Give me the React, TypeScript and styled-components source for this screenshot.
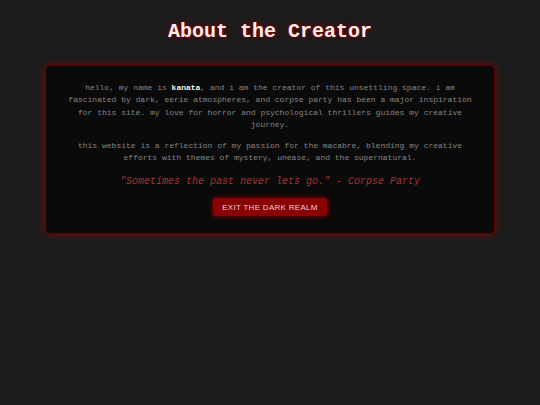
import React from 'react'
import styled, { createGlobalStyle } from 'styled-components'

const mono = `'Courier New', 'Nimbus Mono PS', 'FreeMono', Courier, 'Liberation Mono', monospace`

const GlobalStyle = createGlobalStyle`
  html, body {
    margin: 0;
    background: #1c1c1c;
  }
  body {
    font-family: ${mono};
  }
`

const App: React.FC = () => {
  return (
    <>
      <GlobalStyle />
      <Page>
        <Title>About the Creator</Title>
        <Card>
          <Paragraph>
            hello, my name is <Name>kanata</Name>, and i am the creator of this unsettling space. i am
            fascinated by dark, eerie atmospheres, and corpse party has been a major inspiration for
            this site. my love for horror and psychological thrillers guides my creative journey.
          </Paragraph>
          <Paragraph>
            this website is a reflection of my passion for the macabre, blending my creative efforts
            with themes of mystery, unease, and the supernatural.
          </Paragraph>
          <Quote>"Sometimes the past never lets go." - Corpse Party</Quote>
          <ExitButton>EXIT THE DARK REALM</ExitButton>
        </Card>
      </Page>
    </>
  )
}

export default App

const Page = styled.main`
  min-height: 405px;
  box-sizing: border-box;
  padding-top: 20px;
  display: flex;
  flex-direction: column;
  align-items: center;
`

const Title = styled.h1`
  margin: 0 0 21px;
  font-family: ${mono};
  font-size: 20px;
  line-height: 24px;
  font-weight: 700;
  color: #fbeeee;
  text-shadow: 0 0 3px #8b0000, 0 0 6px #6a0000;
`

const Card = styled.section`
  width: 450px;
  box-sizing: border-box;
  padding: 16px 20px 17px;
  background: #0a0a0a;
  border: 1px solid #5a0505;
  border-radius: 5px;
  box-shadow: 0 0 8px rgba(139, 0, 0, 0.85);
  display: flex;
  flex-direction: column;
  align-items: center;
  text-align: center;
`

const Paragraph = styled.p`
  margin: 0 0 8px;
  font-size: 8px;
  line-height: 12.4px;
  color: #858585;
`

const Name = styled.strong`
  color: #f2f2f2;
`

const Quote = styled.p`
  margin: 4px 0 10px;
  font-size: 10px;
  line-height: 12px;
  font-style: italic;
  color: #a83030;
`

const ExitButton = styled.button`
  height: 18px;
  padding: 0 9px;
  border: none;
  border-radius: 3px;
  background: #8b0000;
  color: #e6d6d6;
  font-family: 'Liberation Sans', Arial, sans-serif;
  font-size: 8px;
  letter-spacing: 0.3px;
  box-shadow: 0 0 5px #a00000;
  cursor: pointer;
`
